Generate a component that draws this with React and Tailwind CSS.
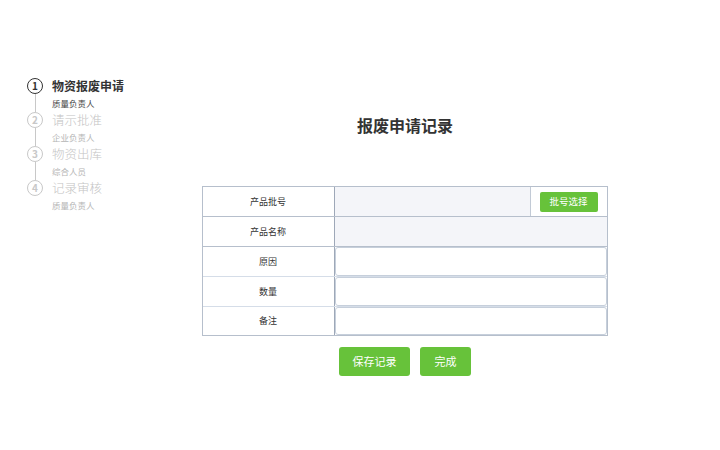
import React from 'react';

const steps = [
  { title: '物资报废申请', sub: '质量负责人' },
  { title: '请示批准', sub: '企业负责人' },
  { title: '物资出库', sub: '综合人员' },
  { title: '记录审核', sub: '质量负责人' },
];

const fields = [
  { label: '产品批号', kind: 'batch' },
  { label: '产品名称', kind: 'readonly' },
  { label: '原因', kind: 'input' },
  { label: '数量', kind: 'input' },
  { label: '备注', kind: 'input' },
];

const Steps = () => (
  <div className="flex flex-col">
    {steps.map((s, i) => {
      const active = i === 0;
      const last = i === steps.length - 1;
      return (
        <div key={s.title} className="flex h-[34px]">
          <div className="flex w-4 flex-col items-center">
            <div
              className={
                active
                  ? 'flex h-4 w-4 items-center justify-center rounded-full border-[1.5px] border-[#333] text-[10px] font-bold leading-none text-[#333]'
                  : 'flex h-4 w-4 items-center justify-center rounded-full border-[1.5px] border-[#c8c8c8] text-[10px] font-bold leading-none text-[#c8c8c8]'
              }
            >
              {i + 1}
            </div>
            {!last && <div className="w-px flex-1 bg-[#c8c8c8]" />}
          </div>
          <div className="ml-[9px] flex flex-col">
            <div
              className={
                active
                  ? 'h-4 text-[12px] font-bold leading-4 text-[#333]'
                  : 'h-4 text-[12.5px] font-light leading-4 text-[#c4c4c4]'
              }
            >
              {s.title}
            </div>
            <div
              className={
                active
                  ? 'mt-[4px] text-[8.5px] leading-[10px] text-[#444]'
                  : 'mt-[4px] text-[8.5px] leading-[10px] text-[#b5b5b5]'
              }
            >
              {s.sub}
            </div>
          </div>
        </div>
      );
    })}
  </div>
);

const Row = ({ field, lastRow }) => {
  const rowBorder = lastRow
    ? 'h-[28px]'
    : field.kind === 'input'
      ? 'h-[30px] border-b border-[#d5dde8]'
      : 'h-[30px] border-b border-[#b6bfcc]';
  return (
    <div className={`flex ${rowBorder}`}>
      <div className="flex w-[132px] shrink-0 items-center justify-center border-r border-[#9ea8b8] text-[9px] text-[#333]">
        {field.label}
      </div>
      {field.kind === 'batch' && (
        <>
          <div className="flex-1 border-r border-[#c2cad6] bg-[#f4f5f9]" />
          <div className="flex w-[76px] items-center justify-center">
            <button className="h-5 w-[58px] rounded-[2px] bg-[#67c23a] text-[9.5px] text-white">批号选择</button>
          </div>
        </>
      )}
      {field.kind === 'readonly' && <div className="flex-1 bg-[#f4f5f9]" />}
      {field.kind === 'input' && (
        <div className="flex-1 rounded-[3px] border border-[#c6cfdb] bg-white" />
      )}
    </div>
  );
};

export default function App() {
  return (
    <div
      className="flex h-[450px] w-[720px] bg-white"
      style={{ fontFamily: '"Noto Sans CJK SC", "Noto Sans", sans-serif' }}
    >
      <div className="w-[140px] shrink-0 pl-[27px] pt-[78px]">
        <Steps />
      </div>
      <div className="flex w-[530px] flex-col items-center pt-[114px]">
        <h1 className="text-[16px] font-bold leading-[22px] text-[#333]">报废申请记录</h1>
        <div className="ml-[-1px] mt-[50px] w-[406px] border border-[#b6bfcc]">
          {fields.map((f, i) => (
            <Row key={f.label} field={f} lastRow={i === fields.length - 1} />
          ))}
        </div>
        <div className="mt-[11px] flex gap-[10px]">
          <button className="h-[29px] w-[71px] rounded-[3px] bg-[#67c23a] text-[11px] text-white">保存记录</button>
          <button className="h-[29px] w-[51px] rounded-[3px] bg-[#67c23a] text-[11px] text-white">完成</button>
        </div>
      </div>
    </div>
  );
}
